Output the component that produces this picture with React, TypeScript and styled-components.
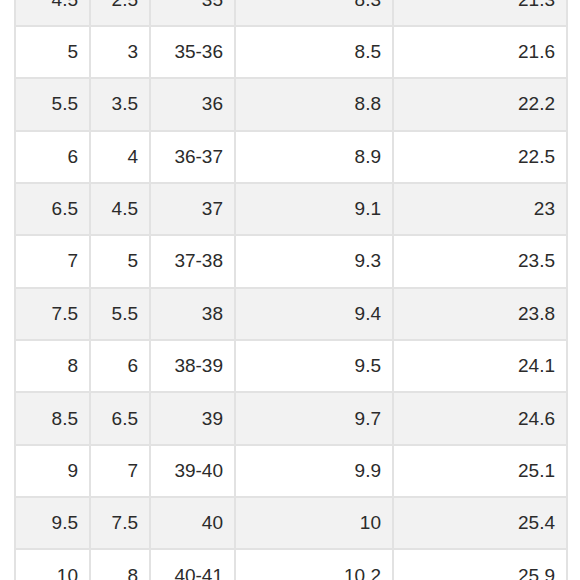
import React, { FC } from "react";
import styled, { createGlobalStyle } from "styled-components";

const GlobalStyle = createGlobalStyle`
  html, body {
    margin: 0;
    padding: 0;
    background: #ffffff;
  }
  body {
    font-family: "Liberation Sans", Arial, sans-serif;
  }
`;

const Viewport = styled.div`
  width: 580px;
  height: 580px;
  overflow: hidden;
  background: #ffffff;
`;

const SizeTable = styled.table`
  border-collapse: collapse;
  table-layout: fixed;
  width: 552px;
  margin-left: 14px;
  margin-top: -27.5px;
  color: #2b2b2b;
  font-size: 19px;
`;

const Row = styled.tr<{ $striped: boolean }>`
  background: ${(p) => (p.$striped ? "#f2f2f2" : "#ffffff")};
`;

const Cell = styled.td`
  height: 50.37px;
  padding: 0 11px 0 0;
  border: 2px solid #e2e2e2;
  text-align: right;
  vertical-align: middle;
  white-space: nowrap;
`;

const widths = [75, 60, 85, 158, 174];

const sizes: string[][] = [
  ["4.5", "2.5", "35", "8.3", "21.3"],
  ["5", "3", "35-36", "8.5", "21.6"],
  ["5.5", "3.5", "36", "8.8", "22.2"],
  ["6", "4", "36-37", "8.9", "22.5"],
  ["6.5", "4.5", "37", "9.1", "23"],
  ["7", "5", "37-38", "9.3", "23.5"],
  ["7.5", "5.5", "38", "9.4", "23.8"],
  ["8", "6", "38-39", "9.5", "24.1"],
  ["8.5", "6.5", "39", "9.7", "24.6"],
  ["9", "7", "39-40", "9.9", "25.1"],
  ["9.5", "7.5", "40", "10", "25.4"],
  ["10", "8", "40-41", "10.2", "25.9"],
  ["10.5", "8.5", "41", "10.3", "26.2"],
];

const App: FC = () => {
  return (
    <Viewport>
      <GlobalStyle />
      <SizeTable>
        <colgroup>
          {widths.map((w, i) => (
            <col key={i} style={{ width: w }} />
          ))}
        </colgroup>
        <tbody>
          {sizes.map((row, i) => (
            <Row key={i} $striped={i % 2 === 0}>
              {row.map((v, j) => (
                <Cell key={j}>{v}</Cell>
              ))}
            </Row>
          ))}
        </tbody>
      </SizeTable>
    </Viewport>
  );
};

export default App;
